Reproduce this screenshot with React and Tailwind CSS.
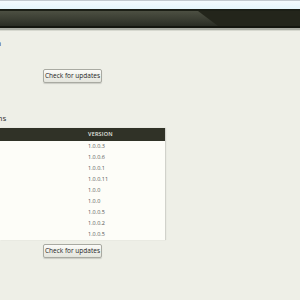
import React from "react";

const versions = ["1.0.0.3", "1.0.0.6", "1.0.0.1", "1.0.0.11", "1.0.0", "1.0.0", "1.0.0.5", "1.0.0.2", "1.0.0.5"];

function UpdateButton() {
  return (
    <button className="h-[14px] w-[59px] rounded-[2px] border border-[#a9aaa2] bg-gradient-to-b from-[#fbfbf8] to-[#e4e5dd] text-[6.5px] leading-none text-[#1e1e1e] shadow-[0_1px_1px_rgba(0,0,0,0.15)]">
      Check for updates
    </button>
  );
}

export default function App() {
  return (
    <div className="flex h-[300px] w-[300px] flex-col overflow-hidden bg-[#eeefe7] font-['Open_Sans',sans-serif] text-[#333]">
      <div className="h-[9px] border-t border-[#c3cace] bg-gradient-to-b from-[#f4fbfc] to-[#e6f6fa]" />
      <div className="flex h-[19px] border-y-2 border-t-[#1c1f16] border-b-[#14160f] bg-[#23251b]">
        <div className="w-[218px] bg-gradient-to-b from-[#4c4f42] via-[#3c3f34] to-[#2a2d24] [clip-path:polygon(0_0,198px_0,218px_100%,0_100%)]" />
      </div>
      <div className="h-[2px] bg-[#aaada4]" />
      <div className="h-px bg-[#d6d8cf]" />

      <div className="flex flex-col">
        <p className="-ml-[27px] mt-[7px] text-[8px] leading-[10px] text-[#333]">Version</p>
        <div className="mt-[21px] flex pl-[43px]">
          <UpdateButton />
        </div>
        <p className="-ml-[34px] mt-[30px] text-[8px] leading-[10px] text-[#333]">Extensions</p>

        <div className="mt-[5px] w-[165px] shadow-[1px_0_1px_rgba(0,0,0,0.12)]">
          <div className="flex h-[13px] items-center bg-[#303227] pl-[88px] text-[5.5px] font-semibold tracking-[0.2px] text-[#e8e8e0]">
            VERSION
          </div>
          <div className="flex flex-col bg-[#fdfdf8]">
            {versions.map((v, i) => (
              <div key={i} className="flex h-[11px] items-center pl-[88px] text-[5.5px] text-[#555]">
                {v}
              </div>
            ))}
          </div>
        </div>
        <div className="mt-[4px] flex pl-[43px]">
          <UpdateButton />
        </div>
      </div>
    </div>
  );
}
